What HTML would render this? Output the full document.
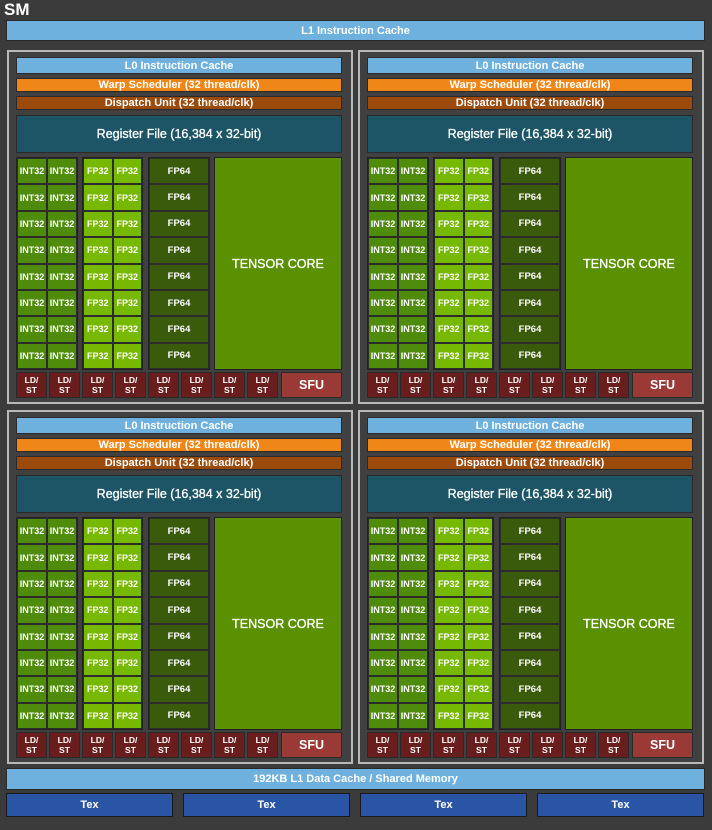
<!DOCTYPE html><html><head><style>
*{margin:0;padding:0;box-sizing:border-box}
body{width:712px;height:830px;background:#3b3b3b;position:relative;overflow:hidden;font-family:"Liberation Sans",sans-serif;font-weight:bold;color:#fff}
.a{position:absolute;display:flex;align-items:center;justify-content:center;text-align:center}
.sm{position:absolute;left:4px;top:0;font-size:17px}
.l1{background:#6eb1de;border:1px solid #2a2a2a;font-size:11px}
.q{position:absolute;width:346px;height:354px;border:2px solid #b8b8b8;background:#404040}
.q .l0{left:7px;top:5px;width:326px;height:17px;background:#6eb1de;border:1px solid #2a2a2a;font-size:11px}
.q .ws{left:7px;top:26px;width:326px;height:14px;background:#ef8718;border:1px solid #2a2a2a;font-size:11px}
.q .du{left:7px;top:44px;width:326px;height:14px;background:#9b4a0c;border:1px solid #2a2a2a;font-size:11px}
.q .rf{left:7px;top:63px;width:326px;height:38px;background:#1d5567;border:1px solid #2a2a2a;font-size:12.5px;font-weight:normal;-webkit-text-stroke:.3px #fff}
.col{position:absolute;top:105px;height:213px;display:grid;border:1px solid #222}
.col div{display:flex;align-items:center;justify-content:center;font-size:9px;border:1px solid #2c2c2c}
.int{left:7px;width:62px;grid-template-columns:1fr 1fr;grid-template-rows:repeat(8,1fr);background:#4f8c0c}
.fp{left:73px;width:61px;grid-template-columns:1fr 1fr;grid-template-rows:repeat(8,1fr);background:#77b800}
.f64{left:139px;width:62px;grid-template-rows:repeat(8,1fr);background:#3a5b0c}
.f64 div{font-size:9.5px}
.tc{left:205px;top:105px;width:128px;height:213px;background:#5b9100;border:1px solid #222;font-size:12.5px;font-weight:normal;-webkit-text-stroke:.3px #fff}
.ld{position:absolute;top:320px;left:7px;width:326px;height:26px;display:flex;gap:2px}
.ld div{width:31px;background:#6a1d1d;border:1px solid #2a2a2a;font-size:8.5px;line-height:10px;display:flex;align-items:center;justify-content:center;text-align:center}
.ld .sfu{flex:1;background:#9a3a36;font-size:12.5px;margin-left:1px}
.tex{background:#2a55a5;border:1px solid #1a1a1a;font-size:11px;top:793px;height:24px;width:167px}
</style></head><body>
<div class="sm">SM</div>
<div class="a l1" style="left:6px;top:20px;width:699px;height:21px">L1 Instruction Cache</div>

<div class="q" style="left:7px;top:50px">
<div class="a l0">L0 Instruction Cache</div><div class="a ws">Warp Scheduler (32 thread/clk)</div><div class="a du">Dispatch Unit (32 thread/clk)</div><div class="a rf">Register File (16,384 x 32-bit)</div>
<div class="col int"><div>INT32</div><div>INT32</div><div>INT32</div><div>INT32</div><div>INT32</div><div>INT32</div><div>INT32</div><div>INT32</div><div>INT32</div><div>INT32</div><div>INT32</div><div>INT32</div><div>INT32</div><div>INT32</div><div>INT32</div><div>INT32</div></div>
<div class="col fp"><div>FP32</div><div>FP32</div><div>FP32</div><div>FP32</div><div>FP32</div><div>FP32</div><div>FP32</div><div>FP32</div><div>FP32</div><div>FP32</div><div>FP32</div><div>FP32</div><div>FP32</div><div>FP32</div><div>FP32</div><div>FP32</div></div>
<div class="col f64"><div>FP64</div><div>FP64</div><div>FP64</div><div>FP64</div><div>FP64</div><div>FP64</div><div>FP64</div><div>FP64</div></div>
<div class="a tc">TENSOR CORE</div>
<div class="ld"><div>LD/<br>ST</div><div>LD/<br>ST</div><div>LD/<br>ST</div><div>LD/<br>ST</div><div>LD/<br>ST</div><div>LD/<br>ST</div><div>LD/<br>ST</div><div>LD/<br>ST</div><div class="sfu">SFU</div></div>
</div>

<div class="q" style="left:358px;top:50px">
<div class="a l0">L0 Instruction Cache</div><div class="a ws">Warp Scheduler (32 thread/clk)</div><div class="a du">Dispatch Unit (32 thread/clk)</div><div class="a rf">Register File (16,384 x 32-bit)</div>
<div class="col int"><div>INT32</div><div>INT32</div><div>INT32</div><div>INT32</div><div>INT32</div><div>INT32</div><div>INT32</div><div>INT32</div><div>INT32</div><div>INT32</div><div>INT32</div><div>INT32</div><div>INT32</div><div>INT32</div><div>INT32</div><div>INT32</div></div>
<div class="col fp"><div>FP32</div><div>FP32</div><div>FP32</div><div>FP32</div><div>FP32</div><div>FP32</div><div>FP32</div><div>FP32</div><div>FP32</div><div>FP32</div><div>FP32</div><div>FP32</div><div>FP32</div><div>FP32</div><div>FP32</div><div>FP32</div></div>
<div class="col f64"><div>FP64</div><div>FP64</div><div>FP64</div><div>FP64</div><div>FP64</div><div>FP64</div><div>FP64</div><div>FP64</div></div>
<div class="a tc">TENSOR CORE</div>
<div class="ld"><div>LD/<br>ST</div><div>LD/<br>ST</div><div>LD/<br>ST</div><div>LD/<br>ST</div><div>LD/<br>ST</div><div>LD/<br>ST</div><div>LD/<br>ST</div><div>LD/<br>ST</div><div class="sfu">SFU</div></div>
</div>

<div class="q" style="left:7px;top:410px">
<div class="a l0">L0 Instruction Cache</div><div class="a ws">Warp Scheduler (32 thread/clk)</div><div class="a du">Dispatch Unit (32 thread/clk)</div><div class="a rf">Register File (16,384 x 32-bit)</div>
<div class="col int"><div>INT32</div><div>INT32</div><div>INT32</div><div>INT32</div><div>INT32</div><div>INT32</div><div>INT32</div><div>INT32</div><div>INT32</div><div>INT32</div><div>INT32</div><div>INT32</div><div>INT32</div><div>INT32</div><div>INT32</div><div>INT32</div></div>
<div class="col fp"><div>FP32</div><div>FP32</div><div>FP32</div><div>FP32</div><div>FP32</div><div>FP32</div><div>FP32</div><div>FP32</div><div>FP32</div><div>FP32</div><div>FP32</div><div>FP32</div><div>FP32</div><div>FP32</div><div>FP32</div><div>FP32</div></div>
<div class="col f64"><div>FP64</div><div>FP64</div><div>FP64</div><div>FP64</div><div>FP64</div><div>FP64</div><div>FP64</div><div>FP64</div></div>
<div class="a tc">TENSOR CORE</div>
<div class="ld"><div>LD/<br>ST</div><div>LD/<br>ST</div><div>LD/<br>ST</div><div>LD/<br>ST</div><div>LD/<br>ST</div><div>LD/<br>ST</div><div>LD/<br>ST</div><div>LD/<br>ST</div><div class="sfu">SFU</div></div>
</div>

<div class="q" style="left:358px;top:410px">
<div class="a l0">L0 Instruction Cache</div><div class="a ws">Warp Scheduler (32 thread/clk)</div><div class="a du">Dispatch Unit (32 thread/clk)</div><div class="a rf">Register File (16,384 x 32-bit)</div>
<div class="col int"><div>INT32</div><div>INT32</div><div>INT32</div><div>INT32</div><div>INT32</div><div>INT32</div><div>INT32</div><div>INT32</div><div>INT32</div><div>INT32</div><div>INT32</div><div>INT32</div><div>INT32</div><div>INT32</div><div>INT32</div><div>INT32</div></div>
<div class="col fp"><div>FP32</div><div>FP32</div><div>FP32</div><div>FP32</div><div>FP32</div><div>FP32</div><div>FP32</div><div>FP32</div><div>FP32</div><div>FP32</div><div>FP32</div><div>FP32</div><div>FP32</div><div>FP32</div><div>FP32</div><div>FP32</div></div>
<div class="col f64"><div>FP64</div><div>FP64</div><div>FP64</div><div>FP64</div><div>FP64</div><div>FP64</div><div>FP64</div><div>FP64</div></div>
<div class="a tc">TENSOR CORE</div>
<div class="ld"><div>LD/<br>ST</div><div>LD/<br>ST</div><div>LD/<br>ST</div><div>LD/<br>ST</div><div>LD/<br>ST</div><div>LD/<br>ST</div><div>LD/<br>ST</div><div>LD/<br>ST</div><div class="sfu">SFU</div></div>
</div>

<div class="a l1" style="left:6px;top:768px;width:699px;height:22px">192KB L1 Data Cache / Shared Memory</div>
<div class="a tex" style="left:6px">Tex</div>
<div class="a tex" style="left:183px">Tex</div>
<div class="a tex" style="left:360px">Tex</div>
<div class="a tex" style="left:537px">Tex</div>
</body></html>
